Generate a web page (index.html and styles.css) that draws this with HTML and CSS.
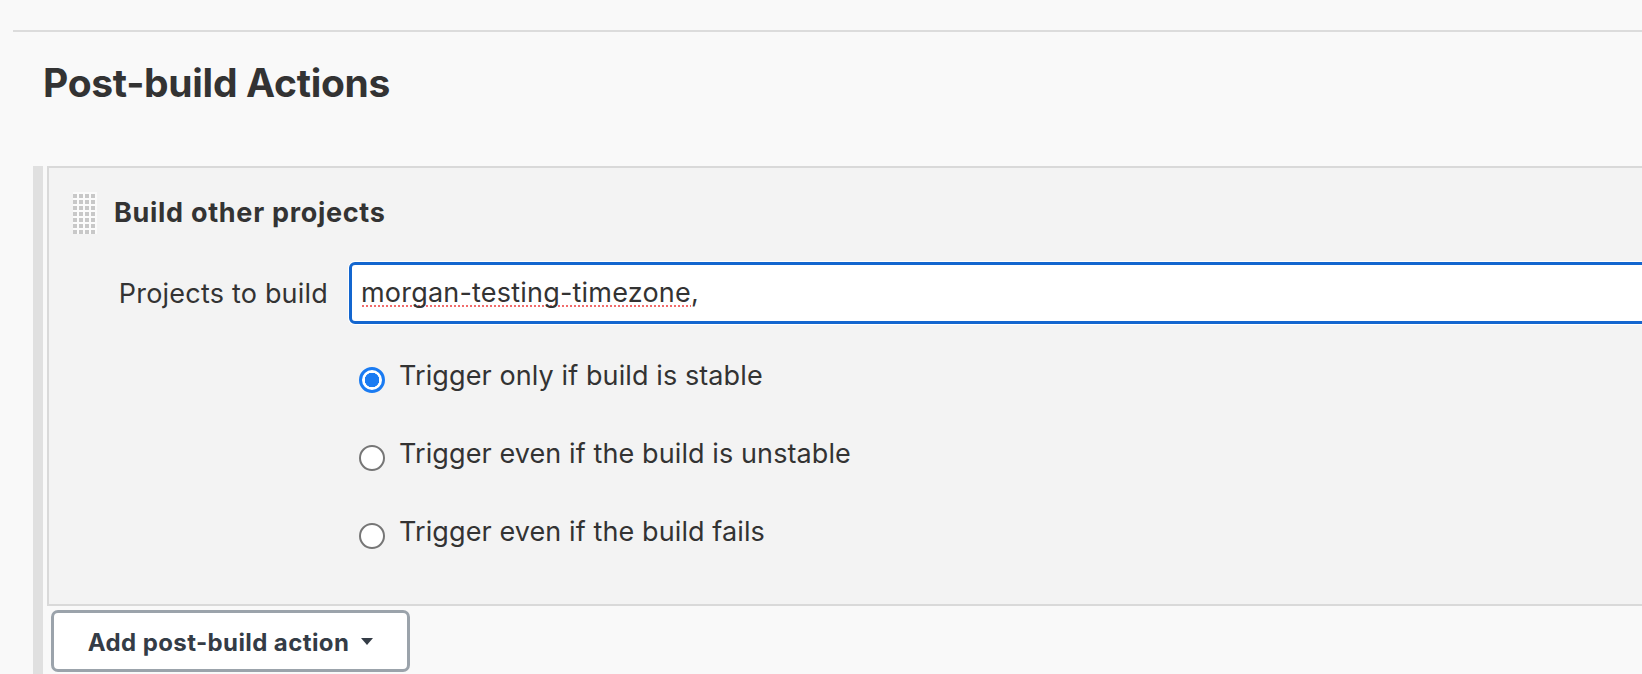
FILE: index.html
```html
<!DOCTYPE html>
<html lang="en">
<head>
<meta charset="utf-8">
<title>Post-build Actions</title>
<link rel="stylesheet" href="styles.css">
</head>
<body>
<div class="page">
  <div class="section-rule"></div>
  <h2 class="section-title">Post-build Actions</h2>
  <div class="hetero">
    <div class="chunk">
      <div class="chunk-head">
        <span class="grip"></span>
        <span class="chunk-title">Build other projects</span>
      </div>
      <div class="field-row">
        <label class="field-label">Projects to build</label>
        <div class="text-input"><span class="misspelled">morgan-testing-timezone</span>,</div>
      </div>
      <div class="radio-list">
        <div class="radio-row"><span class="radio radio-checked"></span><span class="radio-text">Trigger only if build is stable</span></div>
        <div class="radio-row"><span class="radio"></span><span class="radio-text">Trigger even if the build is unstable</span></div>
        <div class="radio-row"><span class="radio"></span><span class="radio-text">Trigger even if the build fails</span></div>
      </div>
    </div>
    <button class="add-btn">Add post-build action <span class="caret"></span></button>
  </div>
</div>
</body>
</html>
```

FILE: styles.css
```css
html, body {
  margin: 0;
  padding: 0;
  background: #f9f9f9;
  overflow: hidden;
  height: 674px;
}
body {
  font-family: Inter, "Noto Sans", "Liberation Sans", sans-serif;
  color: #333;
}
.page {
  display: flex;
  flex-direction: column;
  padding-top: 30px;
}
.section-rule {
  margin-left: 13px;
  height: 2px;
  background: #dcdcdc;
}
.section-title {
  margin: 27px 0 0 43px;
  font-size: 39px;
  line-height: 48px;
  font-weight: 700;
  letter-spacing: -0.3px;
  color: #333;
}
.hetero {
  margin-top: 59px;
  margin-left: 33px;
  border-left: 10px solid #e0e0e0;
  padding-left: 4px;
  display: flex;
  flex-direction: column;
  align-items: flex-start;
  height: 508px;
}
.chunk {
  align-self: stretch;
  margin-right: -20px;
  background: #f3f3f3;
  border: 2px solid #d9d9d9;
  padding: 24px 0 0 24px;
  height: 412px;
  display: flex;
  flex-direction: column;
}
.chunk-head {
  display: flex;
  align-items: flex-start;
  gap: 17px;
}
.grip {
  width: 24px;
  height: 42px;
  background-color: #fbfbfb;
  background-image:
    linear-gradient(90deg, transparent 4px, #fbfbfb 4px),
    linear-gradient(0deg, transparent 4px, #fbfbfb 4px),
    radial-gradient(circle, #c8c8c8 0.9px, transparent 1.1px);
  background-size: 6px 6px, 6px 6px, 2px 2px;
}
.chunk-title {
  font-size: 27px;
  line-height: 32px;
  font-weight: 700;
  letter-spacing: 0.7px;
  margin-top: 5px;
}
.field-row {
  display: flex;
  align-items: center;
  margin-top: 28px;
}
.field-label {
  width: 276px;
  text-align: right;
  font-size: 27px;
  letter-spacing: 0.2px;
  padding-right: 21px;
  box-sizing: border-box;
}
.text-input {
  flex: 1;
  height: 62px;
  box-sizing: border-box;
  background: #fff;
  border: 3px solid #1366cf;
  border-radius: 6px;
  box-shadow: 0 0 0 1px #fff;
  padding: 0 0 0 9px;
  font-size: 27px;
  line-height: 56px;
  letter-spacing: 0.2px;
  color: #333;
}
.misspelled {
  background-image: radial-gradient(circle, #f26b6b 1.1px, transparent 1.5px);
  background-size: 4px 4px;
  background-repeat: repeat-x;
  background-position: 0 calc(100% - 1px);
}
.radio-list {
  display: flex;
  flex-direction: column;
  margin-left: 286px;
  margin-top: 34px;
  gap: 44px;
}
.radio-row {
  display: flex;
  align-items: center;
  gap: 14px;
  height: 34px;
}
.radio {
  width: 26px;
  height: 26px;
  box-sizing: border-box;
  border-radius: 50%;
  background: #fff;
  border: 2px solid #767676;
  margin-top: 10px;
}
.radio-checked {
  border: 3px solid #1a7bf2;
  background: radial-gradient(circle, #1a7bf2 0 7px, #fff 7.5px);
}
.radio-text {
  font-size: 27px;
  letter-spacing: 0.1px;
}
.add-btn {
  margin-top: 4px;
  margin-left: 4px;
  width: 359px;
  height: 62px;
  border: 3px solid #9ba3ab;
  border-radius: 7px;
  background: #fff;
  font-family: Inter, "Noto Sans", "Liberation Sans", sans-serif;
  font-size: 24px;
  letter-spacing: 0.4px;
  font-weight: 700;
  color: #343c46;
  display: flex;
  align-items: center;
  justify-content: center;
  gap: 12px;
  padding: 3px 0 0 0;
  flex-shrink: 0;
}
.caret {
  width: 0;
  height: 0;
  border-left: 6px solid transparent;
  border-right: 6px solid transparent;
  border-top: 7px solid #343c46;
  margin-top: -2px;
}
```
